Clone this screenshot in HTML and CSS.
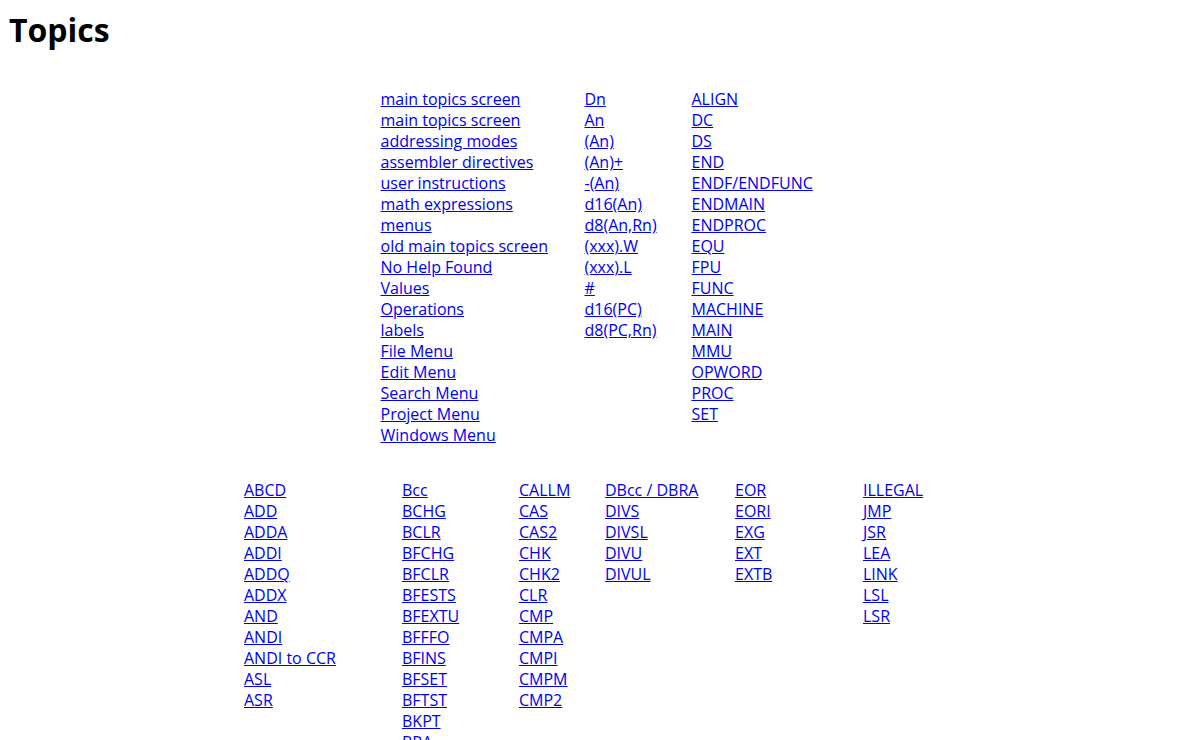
FILE: index.html
```html
<!DOCTYPE html>
<html>
<head>
<meta charset="utf-8">
<title>Topics</title>
<link rel="stylesheet" href="styles.css">
</head>
<body>
<h1 class="title">Topics</h1>

<div class="topics">
  <div class="col col-a">
    <a href="#">main topics screen</a>
    <a href="#">main topics screen</a>
    <a href="#">addressing modes</a>
    <a href="#">assembler directives</a>
    <a href="#">user instructions</a>
    <a href="#">math expressions</a>
    <a href="#">menus</a>
    <a href="#">old main topics screen</a>
    <a href="#">No Help Found</a>
    <a href="#">Values</a>
    <a href="#">Operations</a>
    <a href="#">labels</a>
    <a href="#">File Menu</a>
    <a href="#">Edit Menu</a>
    <a href="#">Search Menu</a>
    <a href="#">Project Menu</a>
    <a href="#">Windows Menu</a>
  </div>
  <div class="col col-b">
    <a href="#">Dn</a>
    <a href="#">An</a>
    <a href="#">(An)</a>
    <a href="#">(An)+</a>
    <a href="#">-(An)</a>
    <a href="#">d16(An)</a>
    <a href="#">d8(An,Rn)</a>
    <a href="#">(xxx).W</a>
    <a href="#">(xxx).L</a>
    <a href="#">#</a>
    <a href="#">d16(PC)</a>
    <a href="#">d8(PC,Rn)</a>
  </div>
  <div class="col col-c">
    <a href="#">ALIGN</a>
    <a href="#">DC</a>
    <a href="#">DS</a>
    <a href="#">END</a>
    <a href="#">ENDF/ENDFUNC</a>
    <a href="#">ENDMAIN</a>
    <a href="#">ENDPROC</a>
    <a href="#">EQU</a>
    <a href="#">FPU</a>
    <a href="#">FUNC</a>
    <a href="#">MACHINE</a>
    <a href="#">MAIN</a>
    <a href="#">MMU</a>
    <a href="#">OPWORD</a>
    <a href="#">PROC</a>
    <a href="#">SET</a>
  </div>
</div>

<div class="instructions">
  <div class="col col-1">
    <a href="#">ABCD</a>
    <a href="#">ADD</a>
    <a href="#">ADDA</a>
    <a href="#">ADDI</a>
    <a href="#">ADDQ</a>
    <a href="#">ADDX</a>
    <a href="#">AND</a>
    <a href="#">ANDI</a>
    <a href="#">ANDI to CCR</a>
    <a href="#">ASL</a>
    <a href="#">ASR</a>
  </div>
  <div class="col col-2">
    <a href="#">Bcc</a>
    <a href="#">BCHG</a>
    <a href="#">BCLR</a>
    <a href="#">BFCHG</a>
    <a href="#">BFCLR</a>
    <a href="#">BFESTS</a>
    <a href="#">BFEXTU</a>
    <a href="#">BFFFO</a>
    <a href="#">BFINS</a>
    <a href="#">BFSET</a>
    <a href="#">BFTST</a>
    <a href="#">BKPT</a>
    <a href="#">BRA</a>
    <a href="#">BSET</a>
    <a href="#">BSR</a>
    <a href="#">BTST</a>
  </div>
  <div class="col col-3">
    <a href="#">CALLM</a>
    <a href="#">CAS</a>
    <a href="#">CAS2</a>
    <a href="#">CHK</a>
    <a href="#">CHK2</a>
    <a href="#">CLR</a>
    <a href="#">CMP</a>
    <a href="#">CMPA</a>
    <a href="#">CMPI</a>
    <a href="#">CMPM</a>
    <a href="#">CMP2</a>
  </div>
  <div class="col col-4">
    <a href="#">DBcc / DBRA</a>
    <a href="#">DIVS</a>
    <a href="#">DIVSL</a>
    <a href="#">DIVU</a>
    <a href="#">DIVUL</a>
  </div>
  <div class="col col-5">
    <a href="#">EOR</a>
    <a href="#">EORI</a>
    <a href="#">EXG</a>
    <a href="#">EXT</a>
    <a href="#">EXTB</a>
  </div>
  <div class="col col-6">
    <a href="#">ILLEGAL</a>
    <a href="#">JMP</a>
    <a href="#">JSR</a>
    <a href="#">LEA</a>
    <a href="#">LINK</a>
    <a href="#">LSL</a>
    <a href="#">LSR</a>
  </div>
</div>
</body>
</html>
```

FILE: styles.css
```css
html {
  background: #ffffff;
}

body {
  margin: 8px;
  font-family: "Open Sans", "Noto Sans", "DejaVu Sans", sans-serif;
  font-size: 16px;
  color: #000000;
}

.title {
  margin: 0;
  font-size: 32px;
  font-weight: 700;
  line-height: 44px;
  padding-left: 1px;
}

.topics,
.instructions {
  display: flex;
  justify-content: center;
  align-items: flex-start;
}

.topics {
  margin-top: 37px;
}

.instructions {
  margin-top: 34px;
}

.col {
  display: flex;
  flex-direction: column;
  align-items: flex-start;
  padding: 0 16px;
  box-sizing: border-box;
  flex: none;
}

.col a {
  color: #0000ee;
  text-decoration: underline;
  line-height: 21px;
  white-space: nowrap;
}

.col-a { width: 204px; }
.col-b { width: 107px; }
.col-c { width: 160px; }

.col-1 { width: 158px; }
.col-2 { width: 117px; }
.col-3 { width: 86px; }
.col-4 { width: 130px; }
.col-5 { width: 128px; }
.col-6 { width: 125px; }
```
